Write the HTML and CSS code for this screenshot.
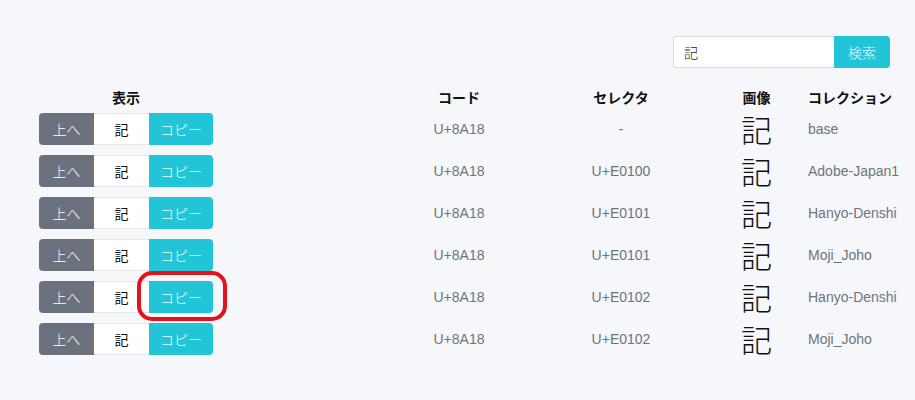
FILE: index.html
```html
<!DOCTYPE html>
<html lang="ja">
<head>
<meta charset="utf-8">
<title>異体字</title>
<link rel="stylesheet" href="styles.css">
</head>
<body>
<div class="page">
  <div class="search">
    <input class="search-input" type="text" value="記">
    <button class="search-btn">検索</button>
  </div>
  <div class="table">
    <div class="row head">
      <div class="c-show">表示</div>
      <div class="c-sp"></div>
      <div class="c-code">コード</div>
      <div class="c-sel">セレクタ</div>
      <div class="c-img">画像</div>
      <div class="c-col">コレクション</div>
    </div>
    <div class="row">
      <div class="c-show"><div class="grp"><span class="b b-up">上へ</span><span class="b b-ch">記</span><span class="b b-cp">コピー</span></div></div>
      <div class="c-sp"></div>
      <div class="c-code">U+8A18</div>
      <div class="c-sel">-</div>
      <div class="c-img">記</div>
      <div class="c-col">base</div>
    </div>
    <div class="row">
      <div class="c-show"><div class="grp"><span class="b b-up">上へ</span><span class="b b-ch">記</span><span class="b b-cp">コピー</span></div></div>
      <div class="c-sp"></div>
      <div class="c-code">U+8A18</div>
      <div class="c-sel">U+E0100</div>
      <div class="c-img">記</div>
      <div class="c-col">Adobe-Japan1</div>
    </div>
    <div class="row">
      <div class="c-show"><div class="grp"><span class="b b-up">上へ</span><span class="b b-ch">記</span><span class="b b-cp">コピー</span></div></div>
      <div class="c-sp"></div>
      <div class="c-code">U+8A18</div>
      <div class="c-sel">U+E0101</div>
      <div class="c-img">記</div>
      <div class="c-col">Hanyo-Denshi</div>
    </div>
    <div class="row">
      <div class="c-show"><div class="grp"><span class="b b-up">上へ</span><span class="b b-ch">記</span><span class="b b-cp">コピー</span></div></div>
      <div class="c-sp"></div>
      <div class="c-code">U+8A18</div>
      <div class="c-sel">U+E0101</div>
      <div class="c-img">記</div>
      <div class="c-col">Moji_Joho</div>
    </div>
    <div class="row">
      <div class="c-show"><div class="grp"><span class="b b-up">上へ</span><span class="b b-ch">記</span><span class="b b-cp">コピー</span></div></div>
      <div class="c-sp"></div>
      <div class="c-code">U+8A18</div>
      <div class="c-sel">U+E0102</div>
      <div class="c-img">記</div>
      <div class="c-col">Hanyo-Denshi</div>
    </div>
    <div class="row">
      <div class="c-show"><div class="grp"><span class="b b-up">上へ</span><span class="b b-ch">記</span><span class="b b-cp">コピー</span></div></div>
      <div class="c-sp"></div>
      <div class="c-code">U+8A18</div>
      <div class="c-sel">U+E0102</div>
      <div class="c-img">記</div>
      <div class="c-col">Moji_Joho</div>
    </div>
  </div>
  <div class="mark"></div>
</div>
</body>
</html>
```

FILE: styles.css
```css
html, body {
  margin: 0;
  padding: 0;
  background: #f5f7fb;
}
body {
  font-family: "Liberation Sans", "Noto Sans CJK JP", sans-serif;
  font-size: 14px;
  color: #212529;
}
.page {
  position: relative;
  width: 915px;
  height: 400px;
  padding-top: 36px;
  box-sizing: border-box;
}
.search {
  display: flex;
  justify-content: flex-end;
  padding-right: 25px;
}
.search-input {
  width: 161px;
  height: 32px;
  box-sizing: border-box;
  border: 1px solid #d6dadf;
  border-right: none;
  border-radius: 4px 0 0 4px;
  padding: 0 10px;
  font-family: "Noto Sans CJK JP", sans-serif;
  font-weight: 300;
  font-size: 14px;
  color: #212529;
  background: #fff;
  outline: none;
}
.search-btn {
  width: 56px;
  height: 32px;
  border: none;
  border-radius: 0 4px 4px 0;
  background: #22c4d7;
  color: #e9fbfd;
  font-family: "Noto Sans CJK JP", sans-serif;
  font-weight: 300;
  font-size: 14px;
  padding: 0;
}
.table {
  margin-top: 19px;
  padding-left: 39px;
}
.row {
  display: grid;
  grid-template-columns: 174px 168px 156px 168px 103px 1fr;
  height: 42px;
  align-items: center;
}
.row.head {
  height: 21px;
  font-family: "Noto Sans CJK JP", sans-serif;
  font-weight: 600;
  color: #111;
  font-size: 14px;
}
.row.head > div {
  line-height: 21px;
}
.c-show, .c-code, .c-sel, .c-img {
  text-align: center;
}
.c-col {
  text-align: left;
}
.row:not(.head) .c-code,
.row:not(.head) .c-sel,
.row:not(.head) .c-col {
  color: #6c757d;
}
.row:not(.head) .c-img {
  font-family: "Noto Sans CJK JP", serif;
  font-weight: 300;
  font-size: 31px;
  line-height: 42px;
  color: #111;
}
.grp {
  display: flex;
  height: 32px;
}
.b {
  display: flex;
  align-items: center;
  justify-content: center;
  font-family: "Noto Sans CJK JP", sans-serif;
  font-weight: 300;
  font-size: 14px;
  box-sizing: border-box;
}
.b-up {
  width: 55px;
  background: #6c727d;
  color: #fff;
  border-radius: 4px 0 0 4px;
}
.b-ch {
  width: 55px;
  background: #fff;
  color: #111;
  font-weight: 400;
  border-top: 1px solid #e3e6ea;
  border-bottom: 1px solid #e3e6ea;
}
.b-cp {
  width: 64px;
  background: #22c4d7;
  color: #eafcfe;
  border-radius: 0 4px 4px 0;
}
.mark {
  position: absolute;
  left: 137px;
  top: 271px;
  width: 90px;
  height: 50px;
  box-sizing: border-box;
  border: 4px solid #e3121b;
  border-radius: 15px;
}
```
